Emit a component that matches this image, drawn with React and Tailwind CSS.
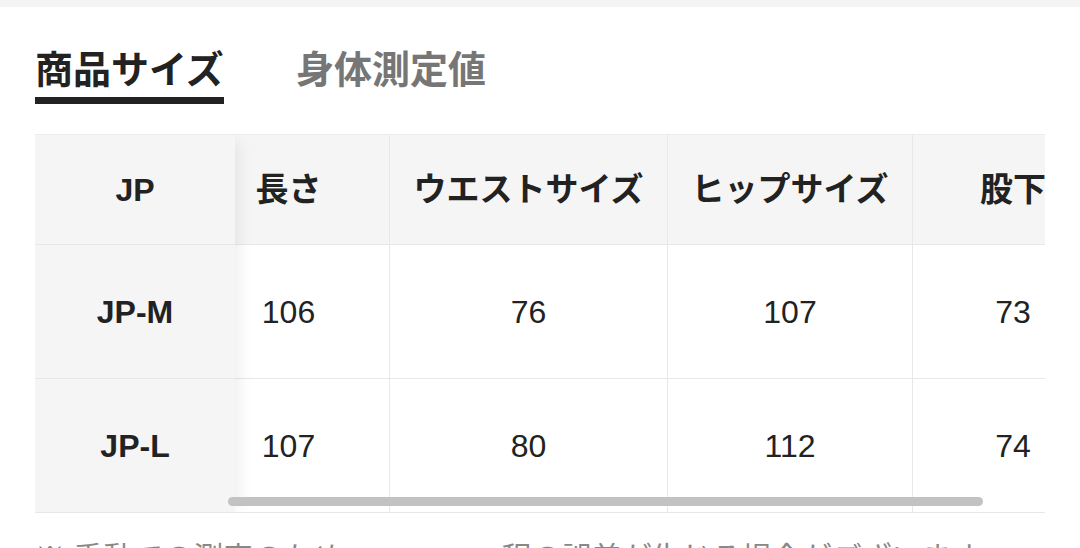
import React from 'react';

const cols = [
  { key: 'length', label: '長さ', w: 'w-[202px]' },
  { key: 'waist', label: 'ウエストサイズ', w: 'w-[278px]' },
  { key: 'hip', label: 'ヒップサイズ', w: 'w-[245px]' },
  { key: 'inseam', label: '股下', w: 'w-[200px]' },
];

const rows = [
  { size: 'JP-M', length: 106, waist: 76, hip: 107, inseam: 73 },
  { size: 'JP-L', length: 107, waist: 80, hip: 112, inseam: 74 },
];

export default function App() {
  return (
    <div className="h-[548px] bg-white text-[#222] font-['Liberation_Sans','Noto_Sans_CJK_JP',sans-serif] overflow-hidden">
      <div className="h-[7px] bg-[#f4f4f4]" />

      <div className="px-[35px]">
        {/* tabs */}
        <div className="mt-[40px] flex gap-[72px] text-[38px] leading-[46px] font-bold">
          <div className="pb-[4px] border-b-[7px] border-[#222]">商品サイズ</div>
          <div className="pb-[4px] border-b-[7px] border-transparent text-[#767676]">身体測定値</div>
        </div>

        {/* size table */}
        <div className="relative mt-[30px] w-[1010px] overflow-hidden border-t border-[#ececec]">
          <div className="flex">
            <div className="relative z-10 w-[200px] shrink-0 bg-[#f5f5f5] shadow-[10px_0_14px_-6px_rgba(0,0,0,0.07)] font-bold text-[32px]">
              <div className="h-[110px] flex items-center justify-center border-b border-[#e8e8e8]">JP</div>
              {rows.map((r) => (
                <div key={r.size} className="h-[134px] flex items-center justify-center border-b border-[#e8e8e8]">
                  {r.size}
                </div>
              ))}
            </div>

            <div className="ml-[-47px] flex shrink-0">
              {cols.map((c, i) => (
                <div
                  key={c.key}
                  className={`${c.w} shrink-0 ${i < cols.length - 1 ? 'border-r border-[#e8e8e8]' : ''}`}
                >
                  <div className="h-[110px] flex items-center justify-center bg-[#f5f5f5] border-b border-[#e8e8e8] font-bold text-[33px] whitespace-nowrap">
                    {c.label}
                  </div>
                  {rows.map((r) => (
                    <div
                      key={r.size}
                      className="h-[134px] flex items-center justify-center border-b border-[#e8e8e8] text-[32px]"
                    >
                      {r[c.key]}
                    </div>
                  ))}
                </div>
              ))}
            </div>
          </div>

          {/* scroll indicator */}
          <div className="absolute z-20 left-[193px] top-[362px] w-[755px] h-[9px] rounded-full bg-[#c2c2c2]" />
        </div>

        <p className="mt-[24px] text-[30px] leading-[42px] text-[#888] whitespace-nowrap">
          ※ 手動での測定のため、1 〜 3cm 程の誤差が生じる場合がございます。
        </p>
      </div>
    </div>
  );
}
